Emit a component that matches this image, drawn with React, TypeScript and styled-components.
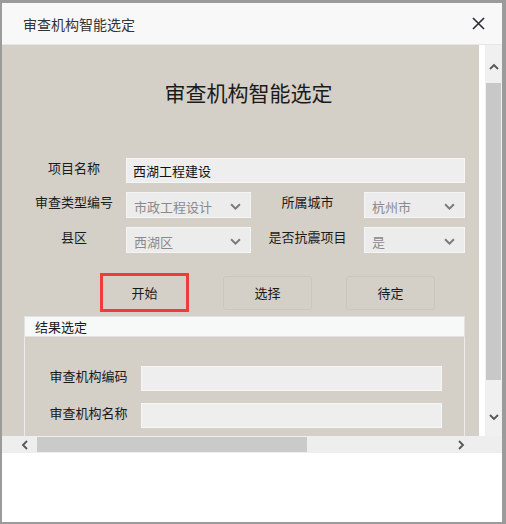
import React from "react";
import styled, { createGlobalStyle } from "styled-components";

const Global = createGlobalStyle`
  html, body { margin: 0; padding: 0; }
  body {
    background: #9b9b9b;
    font-family: "Noto Sans CJK SC", "Noto Sans", "Liberation Sans", sans-serif;
    color: #222;
  }
`;

const Page = styled.div`
  width: 506px;
  height: 524px;
  box-sizing: border-box;
  padding: 3px 4px 2px 2px;
  overflow: hidden;
`;

const Dialog = styled.div`
  width: 500px;
  height: 519px;
  background: #fff;
  display: flex;
  flex-direction: column;
`;

const Header = styled.div`
  height: 41px;
  flex: none;
  background: #f8f8f8;
  border-bottom: 1px solid #e6e6e6;
  display: flex;
  align-items: center;
  justify-content: space-between;
  padding: 0 17px 0 21px;
`;

const HeaderTitle = styled.div`
  font-size: 14px;
  color: #333;
  line-height: 20px;
`;

const Close = styled.div`
  width: 14px;
  height: 14px;
  display: flex;
  align-items: center;
  justify-content: center;
`;

const Body = styled.div`
  flex: none;
  display: grid;
  grid-template-columns: 483px 17px;
  grid-template-rows: 391px 17px;
`;

const Viewport = styled.div`
  background: #fff;
  overflow: hidden;
`;

const Canvas = styled.div`
  width: 477px;
  height: 100%;
  background: #d4d0c8;
  padding-top: 33px;
  box-sizing: border-box;
  overflow: hidden;
`;

const Title = styled.div`
  font-size: 21px;
  line-height: 28px;
  text-align: center;
  padding-left: 16px;
  color: #1a1a1a;
`;

const Form = styled.div`
  margin: 52px 0 0 20px;
  display: grid;
  grid-template-columns: 104px 125px 113px 101px;
  grid-template-rows: 25px 26px 26px;
  row-gap: 9px;
`;

const Label = styled.div`
  align-self: start;
  font-size: 13px;
  line-height: 20px;
  text-align: center;
  color: #1a1a1a;
  white-space: nowrap;
`;

const Input = styled.div<{ $span?: number }>`
  grid-column: span ${(p) => p.$span ?? 1};
  background: #eeeeee;
  border: 1px solid #f6f6f6;
  box-sizing: border-box;
  font-size: 13px;
  color: #111;
  display: flex;
  align-items: center;
  padding-left: 6px;
`;

const Select = styled.div`
  background: #ececec;
  border: 1px solid #f4f4f4;
  box-sizing: border-box;
  font-size: 13px;
  color: #8a8a8a;
  display: flex;
  align-items: center;
  justify-content: space-between;
  padding: 2px 9px 0 7px;
`;

const Buttons = styled.div`
  margin-top: 20px;
  padding-left: 98px;
  height: 39px;
  display: flex;
  align-items: center;
  gap: 34px;
`;

const Btn = styled.div<{ $marked?: boolean }>`
  width: 89px;
  height: ${(p) => (p.$marked ? "39px" : "34px")};
  box-sizing: border-box;
  border: ${(p) => (p.$marked ? "3px solid #ef3b3b" : "1px solid #cbc7bf")};
  border-radius: ${(p) => (p.$marked ? "0" : "3px")};
  display: flex;
  align-items: center;
  justify-content: center;
  font-size: 13px;
  color: #1a1a1a;
`;

const Panel = styled.div`
  margin: 4px 0 0 22px;
  width: 441px;
`;

const PanelHead = styled.div`
  height: 21px;
  box-sizing: border-box;
  background: #f7f9f9;
  border: 1px solid #e2e2e2;
  font-size: 13px;
  line-height: 19px;
  padding-left: 10px;
  color: #1a1a1a;
`;

const PanelBody = styled.div`
  border-left: 1px solid #ebebeb;
  border-right: 1px solid #ebebeb;
  padding: 29px 0 40px 11px;
  display: grid;
  grid-template-columns: 105px 301px;
  grid-auto-rows: 25px;
  row-gap: 12px;
`;

const VBar = styled.div`
  background: #f0f0f0;
  display: flex;
  flex-direction: column;
  align-items: center;
  padding-top: 17px;
`;

const VThumb = styled.div`
  width: 15px;
  height: 297px;
  margin-top: 11px;
  background: #c8c8c8;
`;

const VArrow = styled.div<{ $gap?: number }>`
  margin-top: ${(p) => p.$gap ?? 0}px;
  height: 10px;
  display: flex;
  align-items: center;
`;

const HBar = styled.div`
  grid-column: span 2;
  background: #eeeeee;
  display: flex;
  align-items: center;
  padding-left: 18px;
`;

const HThumb = styled.div`
  width: 270px;
  height: 15px;
  margin-left: 7px;
  background: #cacaca;
`;

const HArrow = styled.div<{ $gap?: number }>`
  margin-left: ${(p) => p.$gap ?? 0}px;
  width: 10px;
  display: flex;
  justify-content: center;
`;

const Footer = styled.div`
  flex: 1;
  background: #fff;
`;

const Chevron = ({ dir, color = "#555", size = 10 }: { dir: "up" | "down" | "left" | "right"; color?: string; size?: number }) => {
  const paths: Record<string, string> = {
    down: "M1 3 L5 7 L9 3",
    up: "M1 7 L5 3 L9 7",
    left: "M7 1 L3 5 L7 9",
    right: "M3 1 L7 5 L3 9",
  };
  return (
    <svg width={size} height={size} viewBox="0 0 10 10">
      <path d={paths[dir]} fill="none" stroke={color} strokeWidth="1.8" />
    </svg>
  );
};

const SelectBox = ({ value }: { value: string }) => (
  <Select>
    <span>{value}</span>
    <Chevron dir="down" color="#7a7a7a" size={11} />
  </Select>
);

export default function App() {
  return (
    <>
      <Global />
      <Page>
        <Dialog>
          <Header>
            <HeaderTitle>审查机构智能选定</HeaderTitle>
            <Close>
              <svg width="13" height="13" viewBox="0 0 13 13">
                <path d="M1 1 L12 12 M12 1 L1 12" stroke="#2b2b33" strokeWidth="1.6" />
              </svg>
            </Close>
          </Header>
          <Body>
            <Viewport>
              <Canvas>
                <Title>审查机构智能选定</Title>
                <Form>
                  <Label>项目名称</Label>
                  <Input $span={3}>西湖工程建设</Input>
                  <Label>审查类型编号</Label>
                  <SelectBox value="市政工程设计" />
                  <Label>所属城市</Label>
                  <SelectBox value="杭州市" />
                  <Label>县区</Label>
                  <SelectBox value="西湖区" />
                  <Label>是否抗震项目</Label>
                  <SelectBox value="是" />
                </Form>
                <Buttons>
                  <Btn $marked>开始</Btn>
                  <Btn>选择</Btn>
                  <Btn>待定</Btn>
                </Buttons>
                <Panel>
                  <PanelHead>结果选定</PanelHead>
                  <PanelBody>
                    <Label>审查机构编码</Label>
                    <Input />
                    <Label>审查机构名称</Label>
                    <Input />
                  </PanelBody>
                </Panel>
              </Canvas>
            </Viewport>
            <VBar>
              <VArrow>
                <Chevron dir="up" />
              </VArrow>
              <VThumb />
              <VArrow $gap={32}>
                <Chevron dir="down" />
              </VArrow>
            </VBar>
            <HBar>
              <HArrow>
                <Chevron dir="left" />
              </HArrow>
              <HThumb />
              <HArrow $gap={149}>
                <Chevron dir="right" />
              </HArrow>
            </HBar>
          </Body>
          <Footer />
        </Dialog>
      </Page>
    </>
  );
}
